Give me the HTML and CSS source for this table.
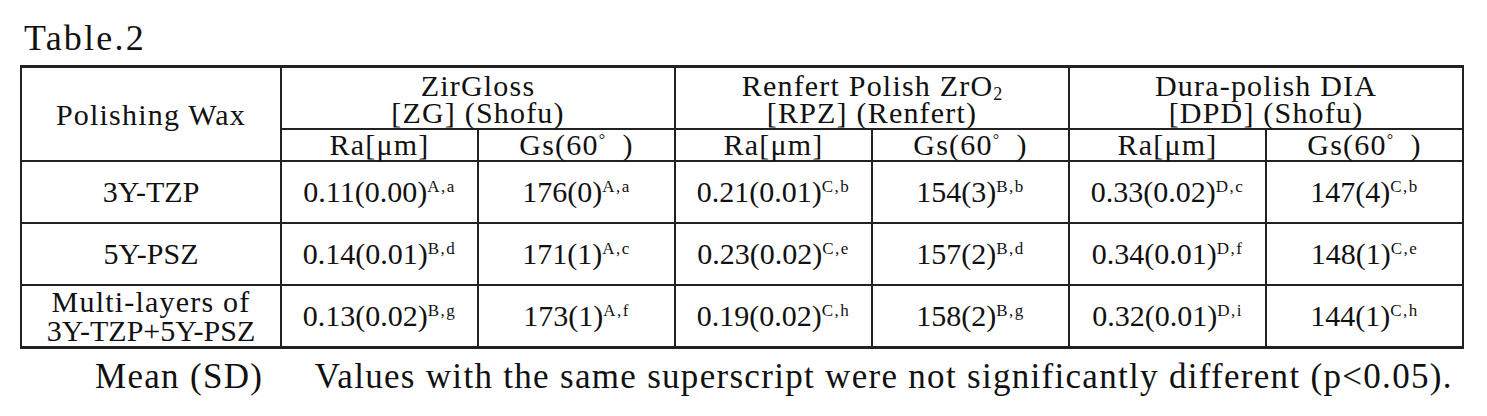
FILE: index.html
```html
<!DOCTYPE html>
<html lang="en">
<head>
    <meta charset="UTF-8">
    <title>Table.2</title>
    <link rel="stylesheet" href="styles.css">
</head>
<body>
    <div class="page">
        <h1 class="caption">Table.2</h1>

        <table class="results">
            <colgroup>
                <col class="col-wax">
                <col class="col-val"><col class="col-val">
                <col class="col-val"><col class="col-val">
                <col class="col-val"><col class="col-val">
            </colgroup>
            <thead>
                <tr class="head-main">
                    <th rowspan="2" class="wax-head">Polishing Wax</th>
                    <th colspan="2">ZirGloss<br>[ZG] (Shofu)</th>
                    <th colspan="2">Renfert Polish ZrO<sub>2</sub><br>[RPZ] (Renfert)</th>
                    <th colspan="2">Dura-polish DIA<br>[DPD] (Shofu)</th>
                </tr>
                <tr class="head-sub">
                    <th>Ra[μm]</th><th>Gs(60<sup class="deg">°</sup>&nbsp;&nbsp;)</th>
                    <th>Ra[μm]</th><th>Gs(60<sup class="deg">°</sup>&nbsp;&nbsp;)</th>
                    <th>Ra[μm]</th><th>Gs(60<sup class="deg">°</sup>&nbsp;&nbsp;)</th>
                </tr>
            </thead>
            <tbody>
                <tr class="row-a">
                    <td>3Y-TZP</td>
                    <td>0.11(0.00)<sup>A,a</sup></td>
                    <td>176(0)<sup>A,a</sup></td>
                    <td>0.21(0.01)<sup>C,b</sup></td>
                    <td>154(3)<sup>B,b</sup></td>
                    <td>0.33(0.02)<sup>D,c</sup></td>
                    <td>147(4)<sup>C,b</sup></td>
                </tr>
                <tr class="row-b">
                    <td>5Y-PSZ</td>
                    <td>0.14(0.01)<sup>B,d</sup></td>
                    <td>171(1)<sup>A,c</sup></td>
                    <td>0.23(0.02)<sup>C,e</sup></td>
                    <td>157(2)<sup>B,d</sup></td>
                    <td>0.34(0.01)<sup>D,f</sup></td>
                    <td>148(1)<sup>C,e</sup></td>
                </tr>
                <tr class="row-c">
                    <td class="two-line"><span class="wide">Multi-layers of</span><br>3Y-TZP+5Y-PSZ</td>
                    <td>0.13(0.02)<sup>B,g</sup></td>
                    <td>173(1)<sup>A,f</sup></td>
                    <td>0.19(0.02)<sup>C,h</sup></td>
                    <td>158(2)<sup>B,g</sup></td>
                    <td>0.32(0.01)<sup>D,i</sup></td>
                    <td>144(1)<sup>C,h</sup></td>
                </tr>
            </tbody>
        </table>

        <p class="note">
            <span class="note-label">Mean (SD)</span>
            <span>Values with the same superscript were not significantly different (p&lt;0.05).</span>
        </p>
    </div>
</body>
</html>
```

FILE: styles.css
```css
body {
    margin: 0;
    background: #fff;
    color: #111;
    font-family: "Liberation Serif", "DejaVu Serif", serif;
}

.page {
    padding: 16px 0 0 20px;
}

.caption {
    margin: 0 0 0 4px;
    font-size: 36px;
    font-weight: normal;
    line-height: 44px;
    letter-spacing: 2.2px;
}

.results {
    margin-top: 5px;
    width: 1442px;
    table-layout: fixed;
    border-collapse: collapse;
    font-size: 30px;
}

.col-wax {
    width: 260px;
}

.col-val {
    width: 197px;
}

.results th,
.results td {
    border: 2px solid #222;
    padding: 0;
    text-align: center;
    vertical-align: middle;
    font-weight: normal;
}

.results th,
.results .wide {
    letter-spacing: 1.2px;
}

.results thead tr:first-child th {
    border-top-width: 3px;
}

.head-main th {
    height: 58px;
    padding-top: 2px;
    line-height: 27px;
}

.head-main th.wax-head {
    padding-top: 0;
}

.head-sub th {
    height: 30px;
    line-height: 30px;
}

.results tbody tr td {
    height: 60px;
    line-height: 30px;
}

.results tbody tr:last-child td {
    border-bottom-width: 3px;
}

.results td.two-line {
    line-height: 29px;
}

.results sup {
    font-size: 17px;
    line-height: 0;
    letter-spacing: 1.5px;
    vertical-align: 10px;
}

.results sup.deg {
    font-size: 16px;
    letter-spacing: 0;
    vertical-align: 10px;
}

.results sub {
    font-size: 18px;
    line-height: 0;
    letter-spacing: 0;
    vertical-align: -4px;
}

.note {
    margin: 8px 0 0 75px;
    font-size: 35px;
    line-height: 40px;
    letter-spacing: 1.3px;
}

.note-label {
    margin-right: 42px;
}
```
